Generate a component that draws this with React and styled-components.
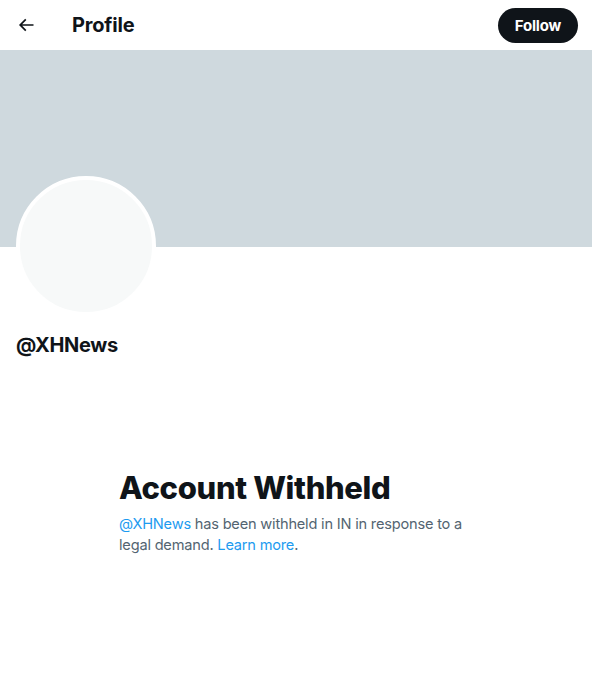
import React from "react";
import styled, { createGlobalStyle } from "styled-components";

const Global = createGlobalStyle`
  html, body { margin: 0; padding: 0; background: #fff; }
  body { font-family: "Inter", "Roboto", "Liberation Sans", sans-serif; color: #0f1419; }
`;

const Page = styled.div`
  width: 592px;
  min-height: 675px;
  display: flex;
  flex-direction: column;
  background: #fff;
`;

const Header = styled.header`
  height: 50px;
  display: flex;
  align-items: center;
  padding: 0 14px 0 16px;
  box-sizing: border-box;
`;

const BackButton = styled.button`
  width: 20px;
  height: 20px;
  border: 0;
  background: transparent;
  padding: 0;
  display: flex;
  align-items: center;
  justify-content: center;
  color: #0f1419;
  margin-right: 36px;
`;

const Title = styled.h2`
  margin: 0;
  font-size: 20px;
  font-weight: 700;
  letter-spacing: -0.2px;
  flex: 1;
`;

const FollowButton = styled.button`
  height: 35px;
  padding: 0 17px;
  border: 0;
  border-radius: 999px;
  background: #0f1419;
  color: #fff;
  font-family: inherit;
  font-size: 15px;
  font-weight: 700;
  letter-spacing: -0.2px;
`;

const Banner = styled.div`
  height: 197px;
  background: #cfd9de;
`;

const ProfileInfo = styled.div`
  padding: 0 16px;
  display: flex;
  flex-direction: column;
  align-items: flex-start;
`;

const Avatar = styled.div`
  width: 132px;
  height: 132px;
  margin-top: -71px;
  border-radius: 50%;
  border: 4px solid #fff;
  background: #f7f9f9;
`;

const Handle = styled.div`
  margin-top: 17px;
  font-size: 20px;
  line-height: 24px;
  font-weight: 700;
  letter-spacing: -0.3px;
`;

const Notice = styled.div`
  width: 354px;
  margin: 113px auto 0;
  display: flex;
  flex-direction: column;
`;

const NoticeTitle = styled.h1`
  margin: 0 0 8px;
  font-size: 31px;
  line-height: 36px;
  font-weight: 800;
  letter-spacing: -0.35px;
`;

const NoticeText = styled.p`
  margin: 0;
  font-size: 14.6px;
  line-height: 21px;
  letter-spacing: -0.2px;
  color: #536471;
`;

const Link = styled.a`
  color: #1d9bf0;
  text-decoration: none;
`;

export default function App() {
  return (
    <Page>
      <Global />
      <Header>
        <BackButton aria-label="Back">
          <svg width="20" height="20" viewBox="0 0 24 24" fill="currentColor">
            <path d="M7.414 13l5.043 5.04-1.414 1.42L3.586 12l7.457-7.46 1.414 1.42L7.414 11H21v2H7.414z" />
          </svg>
        </BackButton>
        <Title>Profile</Title>
        <FollowButton>Follow</FollowButton>
      </Header>
      <Banner />
      <ProfileInfo>
        <Avatar />
        <Handle>@XHNews</Handle>
      </ProfileInfo>
      <Notice>
        <NoticeTitle>Account Withheld</NoticeTitle>
        <NoticeText>
          <Link href="#">@XHNews</Link> has been withheld in IN in response to a
          legal demand. <Link href="#">Learn more</Link>.
        </NoticeText>
      </Notice>
    </Page>
  );
}
